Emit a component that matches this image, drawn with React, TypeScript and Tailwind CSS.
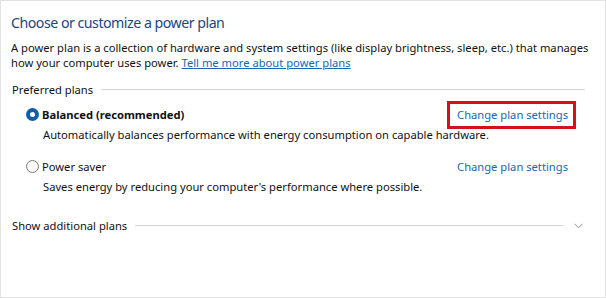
import React from 'react';

function Radio({ checked }: { checked?: boolean }) {
  if (checked) {
    return (
      <span className="flex h-[13px] w-[13px] shrink-0 items-center justify-center rounded-full bg-[#0f5ea8]">
        <span className="h-[5px] w-[5px] rounded-full bg-white" />
      </span>
    );
  }
  return <span className="h-[13px] w-[13px] shrink-0 rounded-full border border-[#7a7a7a] bg-[#fafafa]" />;
}

function Plan({ name, desc, checked, boxed }: { name: string; desc: string; checked?: boolean; boxed?: boolean }) {
  return (
    <div className="flex flex-col">
      <div className="flex h-[18px] items-center">
        <div className="ml-[15px] flex items-center gap-[3px]">
          <Radio checked={checked} />
          <span className={checked ? 'font-bold text-[#111]' : 'text-[#111]'}>{name}</span>
        </div>
        <span className="relative ml-auto mr-[27px] cursor-pointer text-[#1a66b3]">
          Change plan settings
          {boxed && <span className="absolute -bottom-[6px] -left-[10px] -right-[8px] -top-[6px] border-[3px] border-[#d3101f]" />}
        </span>
      </div>
      <p className="ml-[32px] mt-[2px] leading-[18px] text-[#111]">{desc}</p>
    </div>
  );
}

export default function App() {
  return (
    <div className="h-[298px] w-[606px] bg-white">
      <div
        className="h-[298px] w-[606px] border border-[#e2e2e2] bg-white px-[10px] pt-[10px] text-[11.2px]"
        style={{ fontFamily: '"Noto Sans", "Open Sans", sans-serif' }}
      >
        <h1 className="text-[14.2px] leading-[24px] tracking-[-0.5px] text-[#21467f]">Choose or customize a power plan</h1>
        <p className="mt-[5px] whitespace-nowrap leading-[15px] text-[#111]">
          A power plan is a collection of hardware and system settings (like display brightness, sleep, etc.) that manages
          <br />
          how your computer uses power.{' '}
          <a className="cursor-pointer text-[#1a66b3] underline">Tell me more about power plans</a>
        </p>

        <div className="mt-[12px] flex h-[15px] items-center">
          <span className="pl-[1px] leading-[15px] text-[#111]">Preferred plans</span>
          <div className="ml-[8px] mr-[10px] h-px flex-1 bg-[#d4d4d4]" />
        </div>

        <div className="mt-[9px] flex flex-col gap-[14px]">
          <Plan
            checked
            boxed
            name="Balanced (recommended)"
            desc="Automatically balances performance with energy consumption on capable hardware."
          />
          <Plan name="Power saver" desc="Saves energy by reducing your computer's performance where possible." />
        </div>

        <div className="mt-[22px] flex h-[15px] items-center">
          <span className="pl-[1px] leading-[15px] text-[#111]">Show additional plans</span>
          <div className="ml-[8px] h-px flex-1 bg-[#d4d4d4]" />
          <svg className="ml-[10px] mr-[12px]" width="9" height="6" viewBox="0 0 9 6" fill="none">
            <path d="M0.5 0.8 L4.5 4.8 L8.5 0.8" stroke="#8f8f8f" strokeWidth="1" />
          </svg>
        </div>
      </div>
    </div>
  );
}
